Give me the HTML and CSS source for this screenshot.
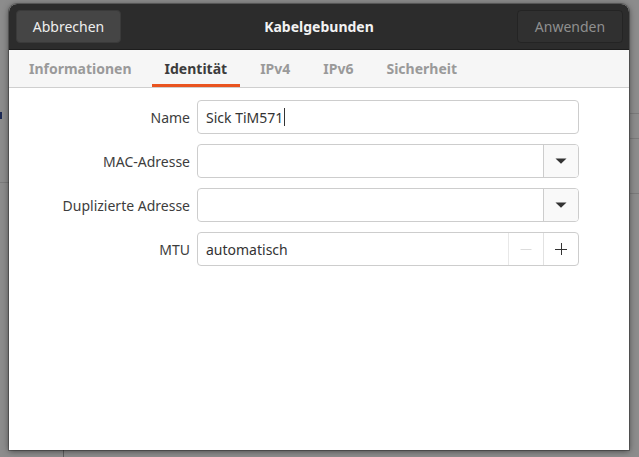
FILE: index.html
```html
<!DOCTYPE html>
<html lang="de">
<head>
<meta charset="utf-8">
<title>Kabelgebunden</title>
<link rel="stylesheet" href="styles.css">
</head>
<body>
<div class="backdrop">
  <span class="bg-line bg-l1"></span>
  <span class="bg-line bg-r1"></span>
  <span class="bg-line bg-r2"></span>
  <span class="bg-line bg-r3"></span>
  <span class="bg-vline"></span>
  <span class="bg-mark"></span>
</div>
<div class="dialog">
  <header class="headerbar">
    <button class="hb-btn cancel">Abbrechen</button>
    <div class="title">Kabelgebunden</div>
    <button class="hb-btn apply">Anwenden</button>
  </header>
  <nav class="tabs">
    <span class="tab">Informationen</span>
    <span class="tab active">Identität</span>
    <span class="tab">IPv4</span>
    <span class="tab">IPv6</span>
    <span class="tab">Sicherheit</span>
  </nav>
  <main class="content">
    <div class="form">
      <label class="lbl">Name</label>
      <div class="field"><span class="value">Sick TiM571</span><span class="caret"></span></div>

      <label class="lbl">MAC-Adresse</label>
      <div class="field combo"><span class="value"></span><span class="combo-btn"><svg width="12" height="6" viewBox="0 0 12 6"><path d="M0.5 0.5 H11.5 L6 5.8 Z" fill="#333"/></svg></span></div>

      <label class="lbl">Duplizierte Adresse</label>
      <div class="field combo"><span class="value"></span><span class="combo-btn"><svg width="12" height="6" viewBox="0 0 12 6"><path d="M0.5 0.5 H11.5 L6 5.8 Z" fill="#333"/></svg></span></div>

      <label class="lbl">MTU</label>
      <div class="field spin"><span class="value">automatisch</span><span class="spin-btn minus"><svg width="12" height="12" viewBox="0 0 12 12"><path d="M0.5 6.5 H11.5" stroke="#dcdcdc" stroke-width="1"/></svg></span><span class="spin-btn plus"><svg width="12" height="12" viewBox="0 0 12 12"><path d="M0 6.5 H12 M6.5 0 V12" stroke="#333" stroke-width="1"/></svg></span></div>
    </div>
  </main>
</div>
</body>
</html>
```
FILE: styles.css
```css
html, body {
  margin: 0;
  height: 100%;
}
body {
  background: #8c8c8c;
  font-family: "Noto Sans", "Open Sans", sans-serif;
  font-size: 14px;
  color: #3d3d3d;
  overflow: hidden;
  position: relative;
  padding: 4px 0 0 9px;
  box-sizing: border-box;
}
.backdrop {
  position: absolute;
  inset: 0;
}
.bg-line {
  position: absolute;
  height: 1px;
  background: #7a7a7a;
}
.bg-l1 { left: 0; width: 9px; top: 182px; }
.bg-r1 { left: 630px; width: 9px; top: 113px; }
.bg-r2 { left: 630px; width: 9px; top: 138px; }
.bg-r3 { left: 630px; width: 9px; top: 193px; }
.bg-vline {
  position: absolute;
  left: 63px;
  top: 450px;
  width: 1px;
  height: 7px;
  background: #5e5e5e;
}
.bg-mark {
  position: absolute;
  left: 0;
  top: 112px;
  width: 2px;
  height: 7px;
  background: #1d2a55;
}
.dialog {
  position: relative;
  width: 620px;
  height: 446px;
  background: #fff;
  border-radius: 8px 8px 0 0;
  box-shadow: 0 1px 6px rgba(0,0,0,0.55), 0 0 0 1px rgba(0,0,0,0.25);
  display: flex;
  flex-direction: column;
  overflow: hidden;
}
.headerbar {
  height: 46px;
  flex: none;
  background: #2c2c2c;
  display: flex;
  align-items: center;
  padding: 0 6px 0 7px;
  border-bottom: 1px solid #1d1d1d;
  box-sizing: border-box;
}
.hb-btn {
  font-family: inherit;
  font-size: 14px;
  height: 33px;
  border-radius: 4px;
  padding: 0;
  box-sizing: border-box;
}
.cancel {
  width: 105px;
  background: #454545;
  border: 1px solid #3a3a3a;
  color: #eeeeee;
}
.apply {
  width: 106px;
  background: #303030;
  border: 1px solid #242424;
  color: #8f8f8f;
}
.title {
  flex: 1;
  text-align: center;
  color: #f2f2f2;
  font-weight: bold;
  font-size: 14px;
}
.tabs {
  height: 38px;
  flex: none;
  background: #f6f6f6;
  border-bottom: 1px solid #cfcfcf;
  box-sizing: border-box;
  display: flex;
  align-items: stretch;
  padding-left: 7px;
}
.tab {
  display: flex;
  align-items: center;
  padding: 2px 13px 0;
  font-weight: bold;
  font-size: 14px;
  color: #9a9a9a;
  border-bottom: 3px solid transparent;
}
.tab + .tab { margin-left: 7px; }
.tab.active {
  color: #3c3c3c;
  border-bottom-color: #e95420;
}
.content {
  flex: 1;
  padding-top: 12px;
}
.form {
  display: grid;
  grid-template-columns: 181px 382px;
  column-gap: 7px;
  row-gap: 10px;
  align-items: center;
}
.lbl {
  text-align: right;
  color: #3d3d3d;
}
.field {
  height: 34px;
  box-sizing: border-box;
  border: 1px solid #cdcdcd;
  border-radius: 4px;
  display: flex;
  align-items: center;
  overflow: hidden;
  background: #fff;
}
.value {
  flex: 1;
  padding-left: 8px;
  color: #333;
  white-space: nowrap;
}
.field .value:first-child:not(:last-child) { flex: none; }
.combo .value, .spin .value { flex: 1 !important; }
.caret {
  width: 1px;
  height: 18px;
  background: #333;
  margin-left: 1px;
  flex: none;
}
.field:not(.combo):not(.spin)::after { content: ""; flex: 1; }
.combo-btn, .spin-btn {
  flex: none;
  width: 35px;
  height: 100%;
  display: flex;
  align-items: center;
  justify-content: center;
  border-left: 1px solid #cdcdcd;
  box-sizing: border-box;
}
.combo-btn { background: #f9f9f9; }
.spin-btn.minus { border-left-color: #e8e8e8; }
.spin-btn.plus { border-left-color: #e2e2e2; }
```
